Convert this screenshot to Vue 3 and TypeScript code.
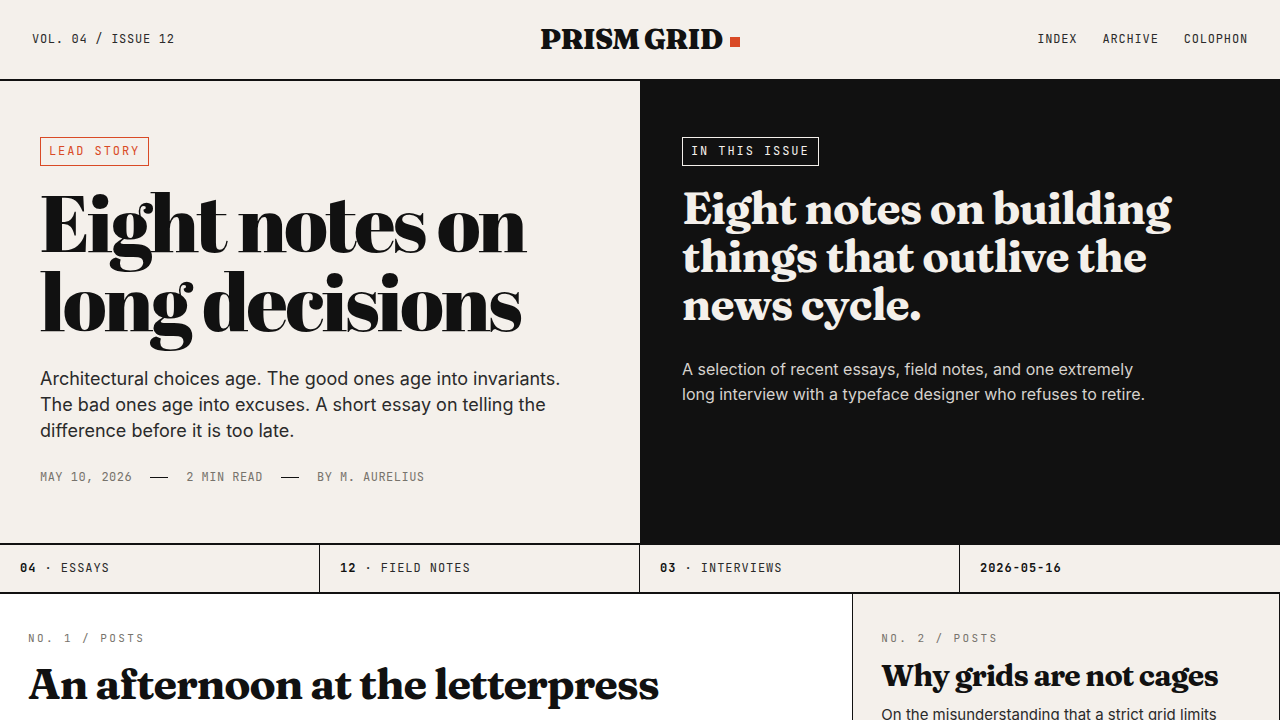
<script setup lang="ts">
interface Stat {
  count: string
  label?: string
}

interface Post {
  kicker: string
  title: string
  excerpt?: string
  featured: boolean
}

const navLinks: string[] = ['Index', 'Archive', 'Colophon']
const meta: string[] = ['May 10, 2026', '2 min read', 'By M. Aurelius']

const stats: Stat[] = [
  { count: '04', label: 'Essays' },
  { count: '12', label: 'Field notes' },
  { count: '03', label: 'Interviews' },
  { count: '2026-05-16' },
]

const posts: Post[] = [
  { kicker: 'No. 1 / Posts', title: 'An afternoon at the letterpress', featured: true },
  {
    kicker: 'No. 2 / Posts',
    title: 'Why grids are not cages',
    excerpt: 'On the misunderstanding that a strict grid limits',
    featured: false,
  },
]
</script>

<template>
  <div class="page">
    <header class="masthead">
      <span class="issue">Vol. 04 / Issue 12</span>
      <a class="logo" href="#">PRISM GRID<span class="logo-mark"></span></a>
      <nav class="nav">
        <a v-for="link in navLinks" :key="link" href="#">{{ link }}</a>
      </nav>
    </header>

    <section class="hero">
      <article class="lead">
        <span class="tag">Lead story</span>
        <h1>Eight notes on long decisions</h1>
        <p>
          Architectural choices age. The good ones age into invariants. The bad ones age into
          excuses. A short essay on telling the difference before it is too late.
        </p>
        <div class="meta">
          <span v-for="item in meta" :key="item">{{ item }}</span>
        </div>
      </article>
      <aside class="contents">
        <span class="tag">In this issue</span>
        <h2>Eight notes on building things that outlive the news cycle.</h2>
        <p>
          A selection of recent essays, field notes, and one extremely long interview with a
          typeface designer who refuses to retire.
        </p>
      </aside>
    </section>

    <section class="stats">
      <div v-for="stat in stats" :key="stat.count" class="stat">
        <strong>{{ stat.count }}</strong><template v-if="stat.label"> · {{ stat.label }}</template>
      </div>
    </section>

    <main class="posts">
      <article v-for="post in posts" :key="post.title" class="post" :class="{ featured: post.featured }">
        <span class="kicker">{{ post.kicker }}</span>
        <h3>{{ post.title }}</h3>
        <p v-if="post.excerpt">{{ post.excerpt }}</p>
      </article>
    </main>
  </div>
</template>

<style>
body {
  background: #f4f0eb;
}
</style>

<style scoped>
.page {
  --paper: #f4f0eb;
  --ink: #111111;
  --text: #2a2a2a;
  --muted: #77736c;
  --accent: #d94a26;
  --serif: "Fraunces", "Liberation Serif", serif;
  --display: "Abril Fatface", "Liberation Serif", serif;
  --mono: "JetBrains Mono", "Liberation Mono", monospace;
  box-sizing: border-box;
  display: flex;
  flex-direction: column;
  min-height: 100vh;
  background: var(--paper);
  color: var(--ink);
  font-family: Inter, "Liberation Sans", sans-serif;
}

.page *,
.page *::before {
  box-sizing: border-box;
}

h1,
h2,
h3,
p {
  margin: 0;
}

h2,
h3,
.logo {
  font-family: var(--serif);
  font-weight: 700;
  letter-spacing: -0.02em;
}

a {
  color: inherit;
  text-decoration: none;
}

.issue,
.nav,
.tag,
.meta,
.stat,
.kicker {
  font-family: var(--mono);
  font-size: 12px;
  line-height: 19px;
  text-transform: uppercase;
}

.masthead {
  display: grid;
  grid-template-columns: 1fr auto 1fr;
  align-items: center;
  padding: 20px 32px;
  border-bottom: 2px solid var(--ink);
}

.issue {
  color: var(--text);
  letter-spacing: 0.06em;
}

.logo {
  font-size: 28px;
  font-weight: 800;
  line-height: 39px;
  letter-spacing: -0.03em;
}

.logo-mark {
  display: inline-block;
  width: 10px;
  height: 10px;
  margin: 0 0 2px 8px;
  background: var(--accent);
}

.nav {
  display: flex;
  justify-content: flex-end;
  gap: 25px;
  color: var(--text);
  letter-spacing: 0.07em;
}

.hero {
  display: grid;
  grid-template-columns: 1fr 1fr;
  border-bottom: 2px solid var(--ink);
}

.lead,
.contents {
  display: flex;
  flex-direction: column;
  align-items: flex-start;
  padding: 56px 40px;
}

.contents {
  background: var(--ink);
  border-left: 2px solid var(--ink);
  color: var(--paper);
}

.tag {
  padding: 4px 8px;
  border: 1px solid currentColor;
  letter-spacing: 0.16em;
}

.lead .tag {
  color: var(--accent);
}

h1 {
  max-width: 540px;
  margin: 16px 0 26px;
  font-family: var(--display);
  font-size: 80px;
  font-weight: 400;
  line-height: 79px;
  letter-spacing: -0.03em;
}

.lead p {
  max-width: 540px;
  color: var(--text);
  font-size: 18px;
  line-height: 26px;
}

.meta {
  display: flex;
  margin-top: 24px;
  color: var(--muted);
  letter-spacing: 0.04em;
}

.meta span {
  display: flex;
  align-items: center;
}

.meta span + span::before {
  content: "";
  width: 18px;
  height: 1px;
  margin: 0 18px;
  background: var(--ink);
}

h2 {
  max-width: 520px;
  margin: 18px 0 29px;
  font-size: 44px;
  line-height: 48px;
}

.contents p {
  max-width: 480px;
  color: #d6d2cd;
  font-size: 16px;
  line-height: 25px;
}

.stats {
  display: grid;
  grid-template-columns: repeat(4, 1fr);
  border-bottom: 2px solid var(--ink);
}

.stat {
  padding: 14px 20px;
  border-right: 1px solid var(--ink);
  color: var(--text);
  letter-spacing: 0.08em;
}

.stat:last-child {
  border-right: 0;
}

.stat strong {
  color: var(--ink);
}

.posts {
  display: grid;
  flex: 1;
  grid-template-columns: 2fr 1fr;
}

.post {
  padding: 36px 28px 0;
  border-right: 1px solid var(--ink);
}

.featured {
  background: #ffffff;
}

.kicker {
  display: block;
  color: var(--muted);
  font-size: 11px;
  line-height: 17px;
  letter-spacing: 0.22em;
}

h3 {
  margin: 12px 0 10px;
  font-size: 30px;
  line-height: 34px;
  letter-spacing: -0.03em;
}

.featured h3 {
  font-size: 43px;
  line-height: 50px;
  letter-spacing: -0.025em;
}

.post p {
  color: var(--text);
  font-size: 15px;
  line-height: 23px;
}
</style>
